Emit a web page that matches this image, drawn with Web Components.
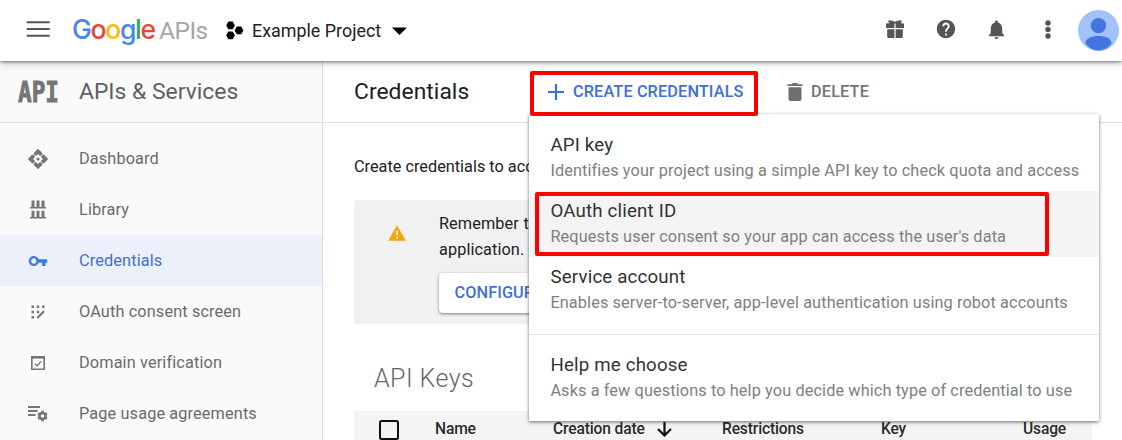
<!DOCTYPE html>
<html lang="en">
<head>
<meta charset="utf-8">
<title>Credentials</title>
<style>
html,body{margin:0;height:100%;overflow:hidden;background:#fff}
body{font-family:Roboto,"Liberation Sans",sans-serif;font-size:16px;color:#212121}
</style>
</head>
<body>
<console-app></console-app>
<script>
const define = (name, html) => {
  const t = document.createElement('template');
  t.innerHTML = html;
  customElements.define(name, class extends HTMLElement {
    constructor() {
      super();
      this.attachShadow({mode: 'open'}).append(t.content.cloneNode(true));
    }
  });
};

define('google-logo', `
<style>
:host{display:flex;align-items:baseline;height:40px;line-height:36px;white-space:nowrap}
.g{font-family:Inter,sans-serif;font-size:26.500px;display:flex;font-weight:500;width:87px;letter-spacing:-1.300px}
.g span{display:block}
.b{color:#4285f4}.r{color:#ea4335}.y{color:#fbbc05}.n{color:#34a853}
.a{font-size:24.500px;color:#a5a5a5;font-weight:400;letter-spacing:-.5px}
</style>
<div class="g"><span class="b">G</span><span class="r">o</span><span class="y">o</span><span class="b">g</span><span class="n">l</span><span class="r">e</span></div>
<div class="a">APIs</div>`);

define('top-bar', `
<style>
:host{display:flex;align-items:center;height:61px;background:#fff;position:relative;z-index:4;box-shadow:0 1px 3px rgba(0,0,0,.45),0 2px 8px rgba(0,0,0,.22);box-sizing:border-box;padding-left:26px}
svg{display:block;flex:none}
google-logo{margin-left:22px;width:154px}
.proj{font-size:17.900px;margin-left:8px;width:140px;color:#212121}
.sp{flex:1}
</style>
<svg style="margin-top:-2px" width="24" height="17" viewBox="0 0 24 17"><path d="M.7 1.200h23M.7 8h23M.7 14.800h23" stroke="#555" stroke-width="2"/></svg>
<google-logo></google-logo>
<svg width="18" height="20" viewBox="0 0 18 20"><path d="M2.300.5h4.400l2.200 3.900-2.200 3.900H2.300L.2 4.400zM2.300 10.400h4.400l2.200 3.900-2.200 3.900H2.300L.2 14.300zM10.800 5.500h4.400l2.200 3.900-2.200 3.900h-4.400L8.600 9.400z"/></svg>
<div class="proj">Example Project</div>
<svg width="15" height="8" viewBox="0 0 15 8"><path d="M0 .5h15L7.500 8z"/></svg>
<div class="sp"></div>
<svg style="margin:-3px 31px 0 0" width="18" height="20" viewBox="0 0 18 20" fill="#555"><path d="M0 5.500q0-1.300 1.300-1.300h2.300Q1.800 3 2.300 1.500h3.300L9 2.800l3.400-1.300h3.300q.5 1.500-1.300 2.700h2.300q1.300 0 1.300 1.300V9H9.600V4.500H8.400V9H0zM1.200 10.200h7.200V19H2.500q-1.300 0-1.300-1.300zM9.600 10.200h7.200v7.500q0 1.300-1.300 1.300H9.600z"/></svg>
<svg style="margin:-3px 28px 0 0" width="22" height="22" viewBox="0 0 24 24" fill="#555"><path d="M12 2C6.480 2 2 6.480 2 12s4.480 10 10 10 10-4.480 10-10S17.520 2 12 2zm1 17h-2v-2h2v2zm2.070-7.750l-.9.920C13.450 12.900 13 13.500 13 15h-2v-.5c0-1.100.45-2.100 1.170-2.830l1.240-1.260c.37-.36.59-.86.59-1.410 0-1.100-.9-2-2-2s-2 .9-2 2H8c0-2.210 1.790-4 4-4s4 1.790 4 4c0 .88-.36 1.680-.93 2.250z"/></svg>
<svg style="margin:-2px 37px 0 0" width="23" height="23" viewBox="0 0 24 24" fill="#555"><path d="M12 22c1.100 0 2-.9 2-2h-4c0 1.100.89 2 2 2zm6-6v-5c0-3.070-1.640-5.640-4.500-6.320V4c0-.83-.67-1.500-1.500-1.500s-1.500.67-1.500 1.500v.68C7.630 5.360 6 7.920 6 11v5l-2 2v1h16v-1l-2-2z"/></svg>
<svg style="margin:-2px 27px 0 0" width="6" height="20" viewBox="0 0 6 20" fill="#555"><circle cx="3" cy="3" r="2.700"/><circle cx="3" cy="9.500" r="2.700"/><circle cx="3" cy="16" r="2.700"/></svg>
<svg style="margin-right:3px" width="41" height="41" viewBox="0 0 41 41"><circle cx="20.500" cy="20.500" r="20.500" fill="#a1c2fa"/><circle cx="20.500" cy="15.600" r="7.700" fill="#4374e0"/><path d="M7.500 33.500c0-5.500 6-7.500 13-7.500s13 2 13 7.500c-3 4-7.500 7-13 7s-10-3-13-7z" fill="#4374e0"/></svg>`);

define('nav-item', `
<style>
:host{display:flex;align-items:center;height:51px;color:#6b6b6b;font-size:16.300px;letter-spacing:.13px}
:host([active]){background:#ebf0fa;color:#3f6fdc}
.i{width:79px;display:flex;justify-content:center;padding-right:3px;box-sizing:border-box;flex:none}
</style>
<div class="i"><slot name="icon"></slot></div><slot></slot>`);

define('side-nav', `
<style>
:host{display:block;width:322px;flex:none;background:#fafafa;border-right:1px solid #ddd}
.h{display:flex;align-items:center;height:61px;border-bottom:1px solid #dedede;color:#5f5f5f;font-size:22.900px}
.api{width:61px;padding-left:18px;font:bold 22.700px/24px "DejaVu Sans Mono",monospace;color:#757575;-webkit-text-stroke:.7px #757575}
.api span{display:inline-block;transform:scaleY(1.240)}
nav{padding-top:10px}
svg{display:block}
</style>
<div class="h"><div class="api"><span>API</span></div><span>APIs &amp; Services</span></div>
<nav>
<nav-item><svg slot="icon" width="20" height="20" viewBox="0 0 20 20" fill="#757575"><path d="M10 0l4 4v1.500L12 6.800 10 4.800 8 6.800 6 5.500V4zM10 20l4-4v-1.500l-2-1.300-2 2-2-2-2 1.300V16zM0 10l4-4h1.500l1.300 2-2 2 2 2-1.300 2H4zM20 10l-4-4h-1.500l-1.300 2 2 2-2 2 1.300 2H16z" stroke="#757575" stroke-width=".5"/><circle cx="10" cy="10" r="1.600"/></svg>Dashboard</nav-item>
<nav-item><svg slot="icon" width="16" height="19" viewBox="0 0 16 19" fill="#757575"><path d="M1.500.5h3V7h2V.5h3V7h2V.5h3V7H16v1.500H0V7h1.500zM1.500 10.700h3v6.200h2v-6.200h3v6.200h2v-6.200h3v6.200H16v1.600H0v-1.600h1.500z"/></svg>Library</nav-item>
<nav-item active><svg slot="icon" width="20" height="20" viewBox="0 0 24 24" fill="#3b78e7"><path d="M12.650 10C11.830 7.670 9.610 6 7 6c-3.310 0-6 2.690-6 6s2.690 6 6 6c2.610 0 4.830-1.670 5.650-4H17v4h4v-4h2v-4H12.650zM7 15.200c-1.760 0-3.200-1.440-3.200-3.200s1.440-3.200 3.200-3.200 3.200 1.440 3.200 3.200-1.440 3.200-3.200 3.200z"/></svg>Credentials</nav-item>
<nav-item><svg slot="icon" width="14" height="14" viewBox="0 0 14 14" fill="#757575"><path d="M.5.500h2.500v2.500H.500zM5.700.500h2.500v2.500H5.700zM11 .500h2.500v2.500H11zM.500 5.700h2.500v2.500H.500zM5.700 5.700h2.500v2.500H5.700zM.500 11h2.500v2.500H.500z"/><path d="M6.300 13l6.700-6.700" stroke="#757575" stroke-width="2.200"/></svg>OAuth consent screen</nav-item>
<nav-item><svg slot="icon" width="14" height="14" viewBox="0 0 14 14" fill="none" stroke="#757575"><path d="M.8.800h12.400v12.400H.8z" stroke-width="1.600"/><path d="M.500 1.600h13" stroke-width="2"/><path d="M4 7.800l2.200 2L10.200 5.400" stroke-width="1.300"/></svg>Domain verification</nav-item>
<nav-item><svg slot="icon" width="20" height="17" viewBox="0 0 20 17"><path d="M0 2h12M0 6h9.500M0 10h7.500" stroke="#757575" stroke-width="1.900"/><circle cx="14.500" cy="11" r="3" fill="none" stroke="#757575" stroke-width="2.600"/><path d="M14.500 5.800v2M14.500 14.200v2M10 8.400l1.700 1M17.300 12.600l1.700 1M10 13.600l1.700-1M17.300 9.400l1.700-1" stroke="#757575" stroke-width="2.600"/></svg>Page usage agreements</nav-item>
</nav>`);

define('red-frame', `<style>:host{position:absolute;border:4px solid #fe0000;border-radius:2px;box-sizing:border-box;z-index:5}</style>`);

define('tool-bar', `
<style>
:host{display:flex;align-items:center;height:61px;border-bottom:1px solid #dedede;padding-left:31px;font-size:16.300px;font-weight:500}
.t{font-size:22.800px;font-weight:400;width:176px;color:#212121;letter-spacing:.05px}
.c{position:relative;z-index:3;display:flex;align-items:center;height:45px;width:228px;padding-left:18px;box-sizing:border-box;color:#3f6fdc;letter-spacing:.12px}
.c svg{margin-right:9px}
.d{display:flex;align-items:center;color:#757575;margin-left:29px;letter-spacing:.15px}
.d svg{margin-right:8px}
red-frame{inset:2px 0 -2px 0}
svg{display:block}
</style>
<div class="t">Credentials</div>
<div class="c"><svg width="16" height="16" viewBox="0 0 16 16"><path d="M8 0v16M0 8h16" stroke="#3b6fdc" stroke-width="2.200"/></svg><span>CREATE CREDENTIALS</span><red-frame></red-frame></div>
<div class="d"><svg width="16" height="18" viewBox="0 0 16 18" fill="#6f6f6f"><path d="M.5 1.200h4.300L5.800 0h4.400l1 1.200h4.300V3H.5zM1.500 4.200h13V16q0 2-2 2h-9q-2 0-2-2z"/></svg><span>DELETE</span></div>`);

define('menu-item', `
<style>
:host{display:flex;flex-direction:column;height:66px;padding:8px 0 0 21px;box-sizing:border-box;position:relative;white-space:nowrap}
:host([active]){background:#f4f4f4}
.t{font-size:18.700px;line-height:25px;color:#333;letter-spacing:.18px}
.d{font-size:16.300px;line-height:25px;color:#808080;letter-spacing:.11px}
</style>
<div class="t"><slot></slot></div><div class="d"><slot name="desc"></slot></div><slot name="mark"></slot>`);

define('drop-menu', `
<style>
:host{display:block;position:absolute;left:206.400px;top:53px;width:570px;height:307px;background:#fff;box-sizing:border-box;padding-top:11px;box-shadow:0 1px 3px rgba(0,0,0,.45),0 2px 5px rgba(0,0,0,.12);z-index:2}
hr{border:0;height:1px;background:#e3e3e3;margin:11px 0 10px}
red-frame{left:6px;top:1px;width:514px;height:64px}
</style>
<menu-item>API key<span slot="desc">Identifies your project using a simple API key to check quota and access</span></menu-item>
<menu-item active>OAuth client ID<span slot="desc">Requests user consent so your app can access the user's data</span><red-frame slot="mark"></red-frame></menu-item>
<menu-item>Service account<span slot="desc">Enables server-to-server, app-level authentication using robot accounts</span></menu-item>
<hr>
<menu-item>Help me choose<span slot="desc">Asks a few questions to help you decide which type of credential to use</span></menu-item>`);

define('notice-box', `
<style>
:host{display:flex;background:#f1f1f1;border-radius:4px;height:124px;box-sizing:border-box;padding:11px 0 0 34px;font-size:16.300px;line-height:26px;color:#212121;letter-spacing:.08px}
svg{display:block;margin:14px 33px 0 0;flex:none}
p{margin:0;width:94px;white-space:nowrap;word-spacing:.6px}
.b{display:flex;align-items:center;height:40px;width:250px;margin-top:10px;background:#fff;border-radius:4px;box-shadow:0 1px 3px rgba(0,0,0,.5);padding-left:15.500px;box-sizing:border-box;color:#3f6fdc;font-weight:500;white-space:nowrap}
</style>
<svg width="18" height="16" viewBox="0 0 18 16"><path d="M9 .3L17.800 15.700H.2z" fill="#f4a50a"/><path d="M9 6v4.200M9 11.800v1.800" stroke="#fff" stroke-width="1.600"/></svg>
<div><p>Remember to<br>application.</p><div class="b">CONFIGURE</div></div>`);

define('key-table', `
<style>
:host{display:flex;align-items:center;background:#f4f4f4;height:36px;font-size:15.600px;font-weight:500;color:#2b2b2b;padding-left:25px;white-space:nowrap;box-sizing:border-box;letter-spacing:-.15px}
svg{display:block}
.n{width:118px;margin-left:36px}.c{width:169px;display:flex;align-items:center}.c svg{margin-left:12px}.r{width:159px}.k{width:142px}
</style>
<svg style="margin-top:2px" width="20" height="20" viewBox="0 0 20 20"><rect x="1" y="1" width="18" height="18" rx="1.500" fill="none" stroke="#111" stroke-width="2"/></svg>
<div class="n">Name</div><div class="c"><span>Creation date</span><svg width="15" height="15" viewBox="0 0 15 15"><path d="M7.500 0v13M1 7l6.500 6.500L14 7" fill="none" stroke="#111" stroke-width="2.200"/></svg></div><div class="r">Restrictions</div><div class="k">Key</div><div>Usage</div>`);

define('main-pane', `
<style>
:host{display:block;flex:1;position:relative;min-width:0;background:#fff}
.b{padding:31px 30px 0 31px}
.i{font-size:16.300px;line-height:26px;height:46px;color:#212121;white-space:nowrap}
h2{margin:0;font-weight:350;font-size:25px;line-height:30px;padding:40px 0 17px 20px;color:#666;letter-spacing:.45px}
</style>
<tool-bar></tool-bar>
<div class="b"><div class="i">Create credentials to access</div><notice-box></notice-box><h2>API Keys</h2><key-table></key-table></div>
<drop-menu></drop-menu>`);

define('console-app', `
<style>
:host{display:flex;flex-direction:column;width:1122px;height:440px;overflow:hidden}
.m{display:flex;flex:1;min-height:0}
</style>
<top-bar></top-bar><div class="m"><side-nav></side-nav><main-pane></main-pane></div>`);
</script>
</body>
</html>
